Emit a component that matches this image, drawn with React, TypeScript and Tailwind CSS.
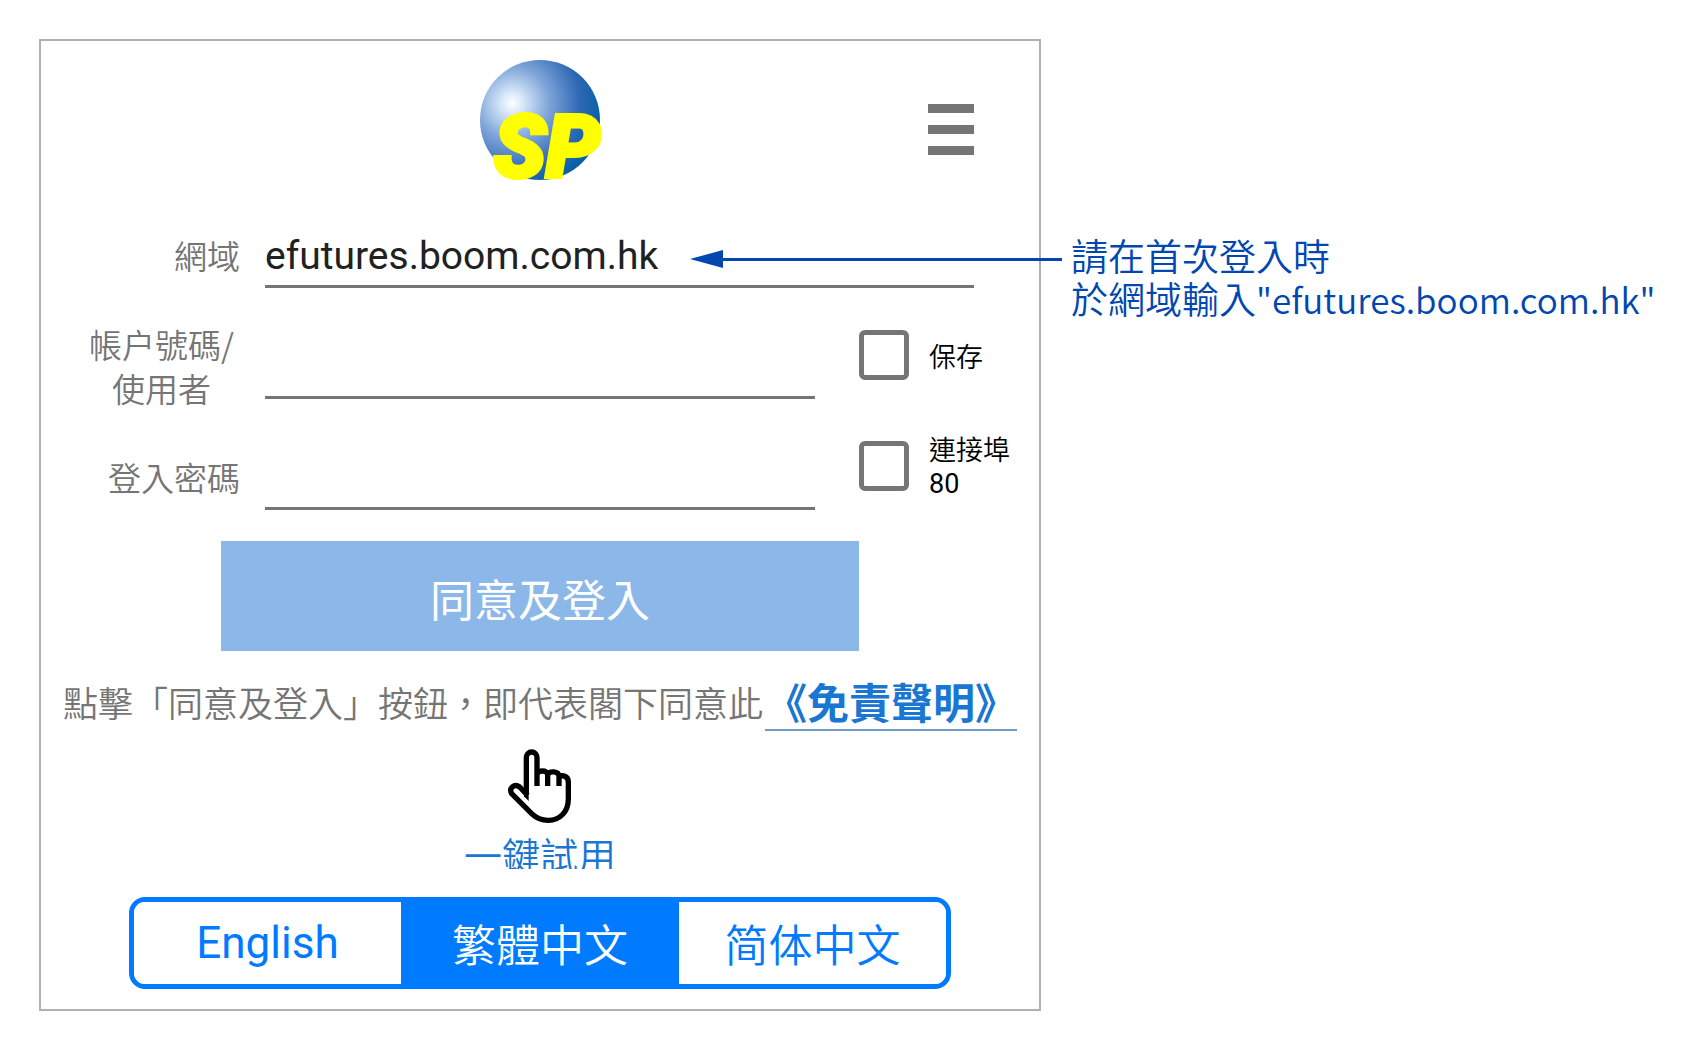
import { useState } from "react";

const languages = [
	{ id: "en", name: "English", font: "font-[Roboto,sans-serif] font-normal" },
	{ id: "tc", name: "繁體中文", font: "font-['Noto_Sans_CJK_TC',sans-serif]" },
	{ id: "sc", name: "简体中文", font: "font-['Noto_Sans_CJK_SC',sans-serif]" },
];

const Logo = () => {
	return (
		<svg className="w-[124px] h-[124px] overflow-visible" viewBox="0 0 124 124" role="img" aria-label="SP">
			<defs>
				<radialGradient id="globe" cx="0.27" cy="0.36" r="0.75">
					<stop offset="0" stopColor="#ffffff" />
					<stop offset="0.12" stopColor="#d8e8f8" />
					<stop offset="0.4" stopColor="#80a6da" />
					<stop offset="0.75" stopColor="#2f68b4" />
					<stop offset="1" stopColor="#0560a6" />
				</radialGradient>
			</defs>
			<circle cx="62" cy="62" r="60" fill="url(#globe)" />
			<text
				x="69"
				y="119"
				textAnchor="middle"
				className="font-[Roboto,sans-serif] font-black italic text-[86px]"
				fill="#ffff00"
				stroke="#ffff00"
				strokeWidth="4"
			>
				SP
			</text>
		</svg>
	)
}

const HandIcon = () => {
	return (
		<svg className="w-[64px] h-[74px]" viewBox="176 55 192 222" fill="none" stroke="#000" strokeWidth="16" strokeLinejoin="round">
			<path d="M231 190V80a16 16 0 0 1 32 0v86" />
			<path d="M263 130c4-11 31-14 32 3v33M295 132c5-12 33-12 34 5v29M329 142c6-11 28-8 28 12v50c0 40-26 65-60 65-22 0-36-6-50-20l-60-60c-9-17 8-32 24-20l24 25" />
			<path d="M224 165v32l14 14v-46z" fill="#000" stroke="none" />
		</svg>
	)
}

const Arrow = () => {
	return (
		<svg className="absolute right-full top-4 mr-[9px] w-[372px] h-[18px]" viewBox="0 0 372 18" fill="#0047b2" aria-hidden="true">
			<path d="M0 9L33 0V18Z" />
			<rect x="32" y="8" width="340" height="3" />
		</svg>
	)
}

const inputStyle = "min-w-0 flex-1 h-[66px] pt-1 border-b-3 border-[#757575] bg-transparent font-[Roboto,sans-serif] font-normal text-[39px] text-[#212121] outline-none"
const checkStyle = "appearance-none shrink-0 w-[50px] h-[50px] rounded-md border-5 border-[#757575] checked:bg-[#757575]"

const App = () => {
	const [domain, setDomain] = useState("efutures.boom.com.hk")
	const [language, setLanguage] = useState("tc")

	return (
		<div className="grid grid-cols-[1002fr_659fr] items-start bg-white pt-[39px] pl-[39px] pb-[38px] font-['Noto_Sans_CJK_TC',sans-serif] font-[350]">

			<main className="border-2 border-[#b0b0b0] pt-[17px] pb-5">
				<header className="grid grid-cols-3 items-center px-[65px]">
					<div className="col-start-2 justify-self-center"><Logo /></div>
					<button aria-label="選單" className="justify-self-end mt-[18px] flex flex-col gap-3">
						<span className="block w-[46px] h-[9px] bg-[#757575]" />
						<span className="block w-[46px] h-[9px] bg-[#757575]" />
						<span className="block w-[46px] h-[9px] bg-[#757575]" />
					</button>
				</header>

				<form className="mt-[29px]" onSubmit={(e) => e.preventDefault()}>
					<div className="flex flex-col gap-[23px] text-[33px] leading-[44px] text-[#757575]">
						<div className="flex items-center h-[88px] pr-[65px]">
							<label htmlFor="domain" className="w-[199px] mr-[25px] text-right">網域</label>
							<input id="domain" className={inputStyle} value={domain} onChange={(e) => setDomain(e.target.value)} />
						</div>

						<div className="flex items-center h-[88px]">
							<label htmlFor="account" className="w-[199px] mr-[25px] pr-1.5 flex justify-end text-center">帳户號碼/<br />使用者</label>
							<input id="account" className={inputStyle} />
							<label className="self-start w-[180px] h-[66px] ml-11 flex items-center gap-5 text-[27px] leading-[33px] text-black">
								<input type="checkbox" className={checkStyle} />
								<span>保存</span>
							</label>
						</div>

						<div className="flex items-center h-[88px]">
							<label htmlFor="password" className="w-[199px] mr-[25px] text-right">登入密碼</label>
							<input id="password" type="password" className={inputStyle} />
							<label className="self-start w-[180px] h-[66px] ml-11 flex items-center gap-5 text-[27px] leading-[33px] text-black">
								<input type="checkbox" className={checkStyle} />
								<span>連接埠<br /><span className="font-[Roboto,sans-serif] font-normal">80</span></span>
							</label>
						</div>
					</div>

					<div className="px-[180px] mt-5">
						<button className="w-full h-[110px] pt-1 bg-[#8cb8e9] text-[44px] text-white font-normal">同意及登入</button>
					</div>
				</form>

				<p className="mt-[23px] flex justify-center items-center gap-[2px] whitespace-nowrap text-[35px] text-[#757575]">
					點擊「同意及登入」按鈕，即代表閣下同意此
					<a href="#disclaimer" className="h-[57px] leading-[54px] border-b-2 border-[#6f9bc9] text-[42px] font-bold text-[#1976d2]">《免責聲明》</a>
				</p>

				<button className="mt-[18px] mx-auto flex flex-col items-center text-[#1976d2]">
					<HandIcon />
					<span className="h-[38px] mt-2 overflow-hidden text-[38px] leading-[46px]">一鍵試用</span>
				</button>

				<nav className="mt-7 mx-[88px] grid grid-cols-[24fr_25fr_24fr] h-[92px] overflow-hidden rounded-2xl border-5 border-[#007bff]">
					{languages.map((item) => (
						<button
							key={item.id}
							onClick={() => setLanguage(item.id)}
							className={`text-[44px] ${item.font} ${item.id === language ? "bg-[#007bff] text-white" : "bg-white text-[#007bff]"}`}
						>
							{item.name}
						</button>
					))}
				</nav>
			</main>

			<aside className="mt-[195px] pl-[30px] text-[37px] leading-[43px] text-[#0047b2]">
				<p className="relative whitespace-nowrap">
					<Arrow />
					請在首次登入時
				</p>
				<p className="whitespace-nowrap">於網域輸入<span className="text-[35px]">"efutures.boom.com.hk"</span></p>
			</aside>

		</div>
	)
}

export default App;
